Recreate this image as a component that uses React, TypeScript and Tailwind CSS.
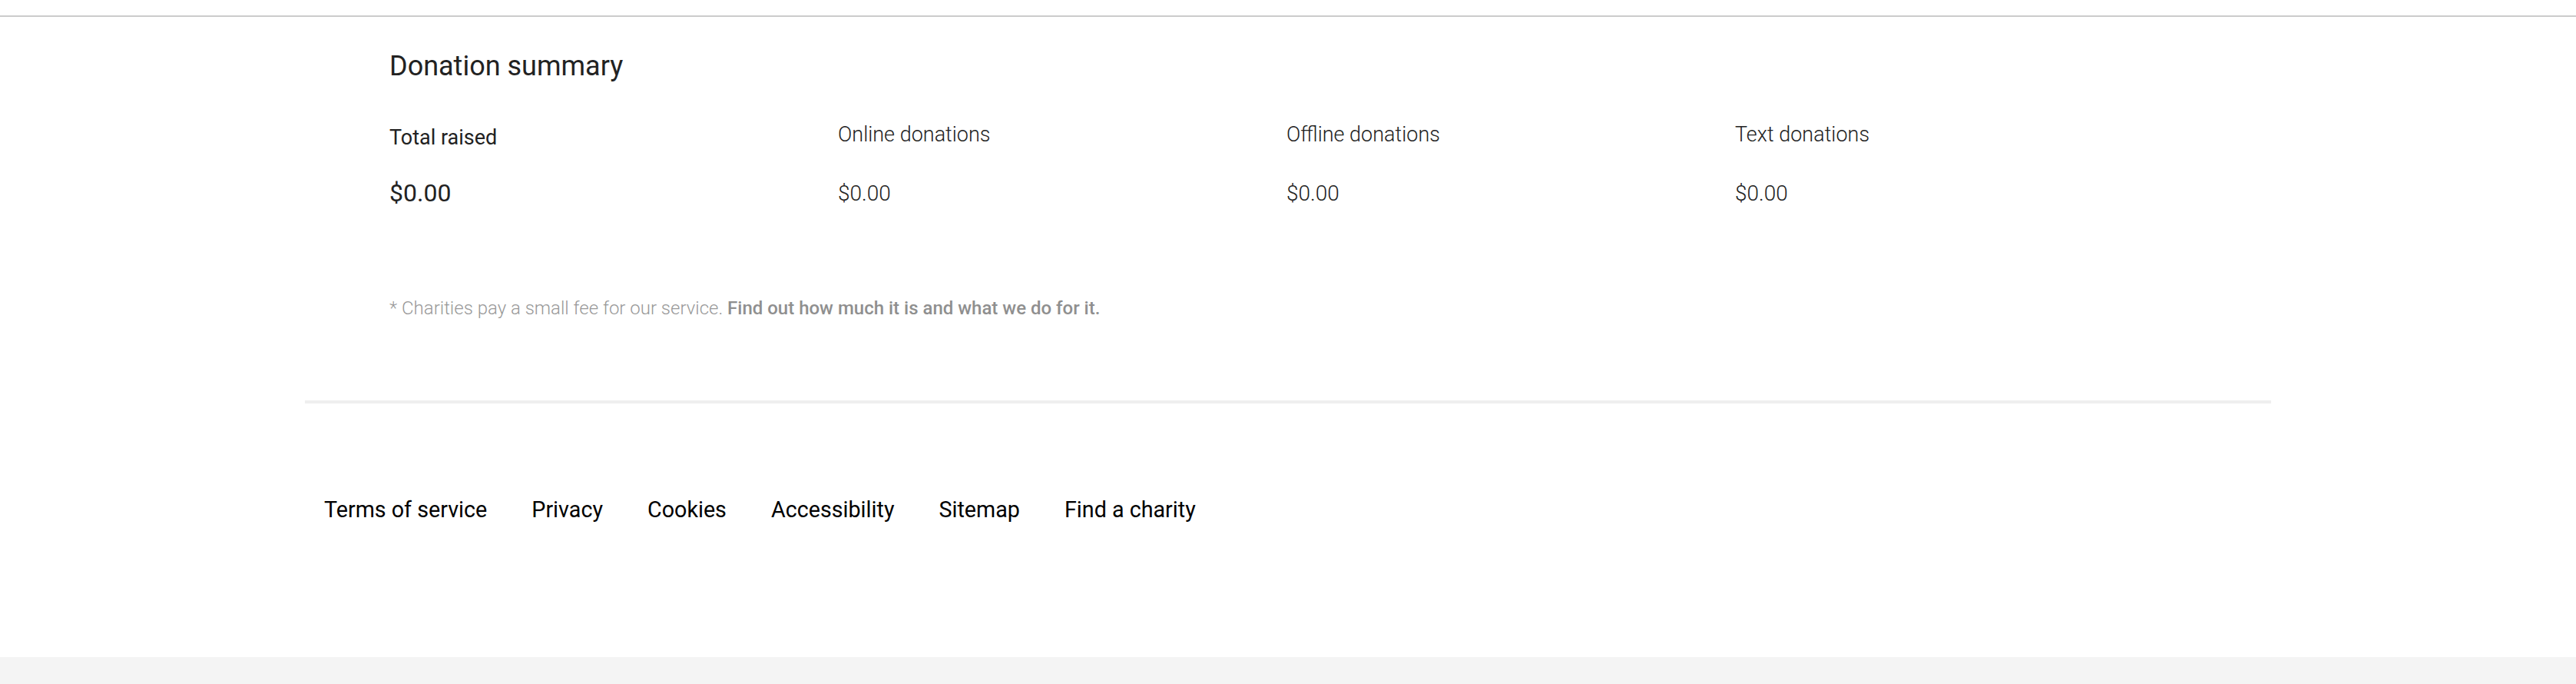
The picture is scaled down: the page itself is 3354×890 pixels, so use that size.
/**
 * DonationSummary — totals panel with fee note and page footer links
 */

const columns = [
  { label: 'Online donations', value: '$0.00' },
  { label: 'Offline donations', value: '$0.00' },
  { label: 'Text donations', value: '$0.00' },
]

const footerLinks = ['Terms of service', 'Privacy', 'Cookies', 'Accessibility', 'Sitemap', 'Find a charity']

export default function App() {
  return (
    <div className="min-h-[890px] bg-white font-['Roboto',sans-serif] flex flex-col">
      {/* Header edge */}
      <div className="h-[20px]" />
      <div className="h-[2px] bg-[#cccccc]" />

      <div className="w-[2560px] mx-auto">
        {/* Summary */}
        <section className="px-[110px]">
          <h2 className="mt-[46px] text-[36px] leading-none font-normal text-[#222222]">Donation summary</h2>

          <div className="mt-[58px] grid grid-cols-[584px_584px_584px_584px]">
            <div className="flex flex-col pt-[4px]">
              <p className="text-[27px] leading-none font-normal text-[#222222]">Total raised</p>
              <p className="mt-[42px] text-[32px] leading-none font-normal text-[#222222]">$0.00</p>
            </div>
            {columns.map((c) => (
              <div key={c.label} className="flex flex-col">
                <p className="text-[27px] leading-none font-light text-[#222222]">{c.label}</p>
                <p className="mt-[49px] text-[28px] leading-none font-light text-[#222222]">{c.value}</p>
              </div>
            ))}
          </div>

          <p className="mt-[122px] text-[24px] leading-none font-light text-[#999999]">
            * Charities pay a small fee for our service.{' '}
            <a href="#" className="font-medium text-[#8f8f8f]">
              Find out how much it is and what we do for it.
            </a>
          </p>
        </section>

        <div className="mt-[108px] h-[4px] bg-[#efefef]" />

        {/* Footer links */}
        <nav className="mt-[124px] pl-[25px] flex gap-[58px]">
          {footerLinks.map((l) => (
            <a key={l} href="#" className="text-[28.7px] leading-none text-black">
              {l}
            </a>
          ))}
        </nav>
      </div>

      <div className="mt-[177px] flex-1 bg-[#f4f4f4]" />
    </div>
  )
}
